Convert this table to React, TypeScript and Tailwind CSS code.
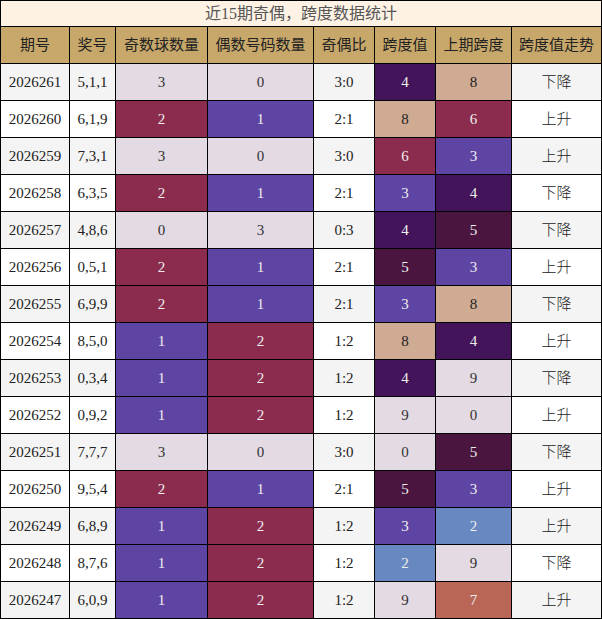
const rows: [string, string, number, number, string, number, number, string][] = [
  ["2026261", "5,1,1", 3, 0, "3:0", 4, 8, "下降"],
  ["2026260", "6,1,9", 2, 1, "2:1", 8, 6, "上升"],
  ["2026259", "7,3,1", 3, 0, "3:0", 6, 3, "上升"],
  ["2026258", "6,3,5", 2, 1, "2:1", 3, 4, "下降"],
  ["2026257", "4,8,6", 0, 3, "0:3", 4, 5, "下降"],
  ["2026256", "0,5,1", 2, 1, "2:1", 5, 3, "上升"],
  ["2026255", "6,9,9", 2, 1, "2:1", 3, 8, "下降"],
  ["2026254", "8,5,0", 1, 2, "1:2", 8, 4, "上升"],
  ["2026253", "0,3,4", 1, 2, "1:2", 4, 9, "下降"],
  ["2026252", "0,9,2", 1, 2, "1:2", 9, 0, "上升"],
  ["2026251", "7,7,7", 3, 0, "3:0", 0, 5, "下降"],
  ["2026250", "9,5,4", 2, 1, "2:1", 5, 3, "上升"],
  ["2026249", "6,8,9", 1, 2, "1:2", 3, 2, "上升"],
  ["2026248", "8,7,6", 1, 2, "1:2", 2, 9, "下降"],
  ["2026247", "6,0,9", 1, 2, "1:2", 9, 7, "上升"],
];

const LAV = "bg-[#e3dae4] text-[#333]";
const MAROON = "bg-[#8b2b4d] text-[#eee]";
const PURPLE = "bg-[#5e44a3] text-[#eee]";

const countColor: Record<number, string> = { 0: LAV, 1: PURPLE, 2: MAROON, 3: LAV };

const spanColor: Record<number, string> = {
  0: LAV,
  2: "bg-[#6788c0] text-[#eee]",
  3: PURPLE,
  4: "bg-[#43145a] text-[#eee]",
  5: "bg-[#4a1640] text-[#eee]",
  6: MAROON,
  7: "bg-[#b96656] text-[#eee]",
  8: "bg-[#cfab93] text-[#222]",
  9: LAV,
};

const headers = ["期号", "奖号", "奇数球数量", "偶数号码数量", "奇偶比", "跨度值", "上期跨度", "跨度值走势"];

function Cell({ className, children }: { className: string; children: React.ReactNode }) {
  return <div className={`h-9 flex items-center justify-center ${className}`}>{children}</div>;
}

export default function App() {
  return (
    <div className="w-[602px] font-['Liberation_Serif','Noto_Sans_CJK_SC',serif] text-[15px] text-[#222]">
      <div className="grid grid-cols-[68px_45px_91px_105px_60px_60px_75px_89px] gap-px bg-black p-px">
        <div className="col-span-8 h-[25px] bg-[#fef2e5] text-[#555] text-[16px] flex items-center justify-center">
          近15期奇偶，跨度数据统计
        </div>
        {headers.map((h) => (
          <Cell key={h} className="bg-[#c8a86a] text-[#222]">
            {h}
          </Cell>
        ))}
        {rows.map((r, i) => {
          const bg = i % 2 === 0 ? "bg-[#f4f4f4]" : "bg-white";
          return [
            <Cell key={r[0] + "a"} className={bg}>{r[0]}</Cell>,
            <Cell key={r[0] + "b"} className={bg}>{r[1]}</Cell>,
            <Cell key={r[0] + "c"} className={countColor[r[2]]}>{r[2]}</Cell>,
            <Cell key={r[0] + "d"} className={countColor[r[3]]}>{r[3]}</Cell>,
            <Cell key={r[0] + "e"} className={bg}>{r[4]}</Cell>,
            <Cell key={r[0] + "f"} className={spanColor[r[5]]}>{r[5]}</Cell>,
            <Cell key={r[0] + "g"} className={spanColor[r[6]]}>{r[6]}</Cell>,
            <Cell key={r[0] + "h"} className={`${bg} font-light`}>{r[7]}</Cell>,
          ];
        })}
      </div>
    </div>
  );
}
